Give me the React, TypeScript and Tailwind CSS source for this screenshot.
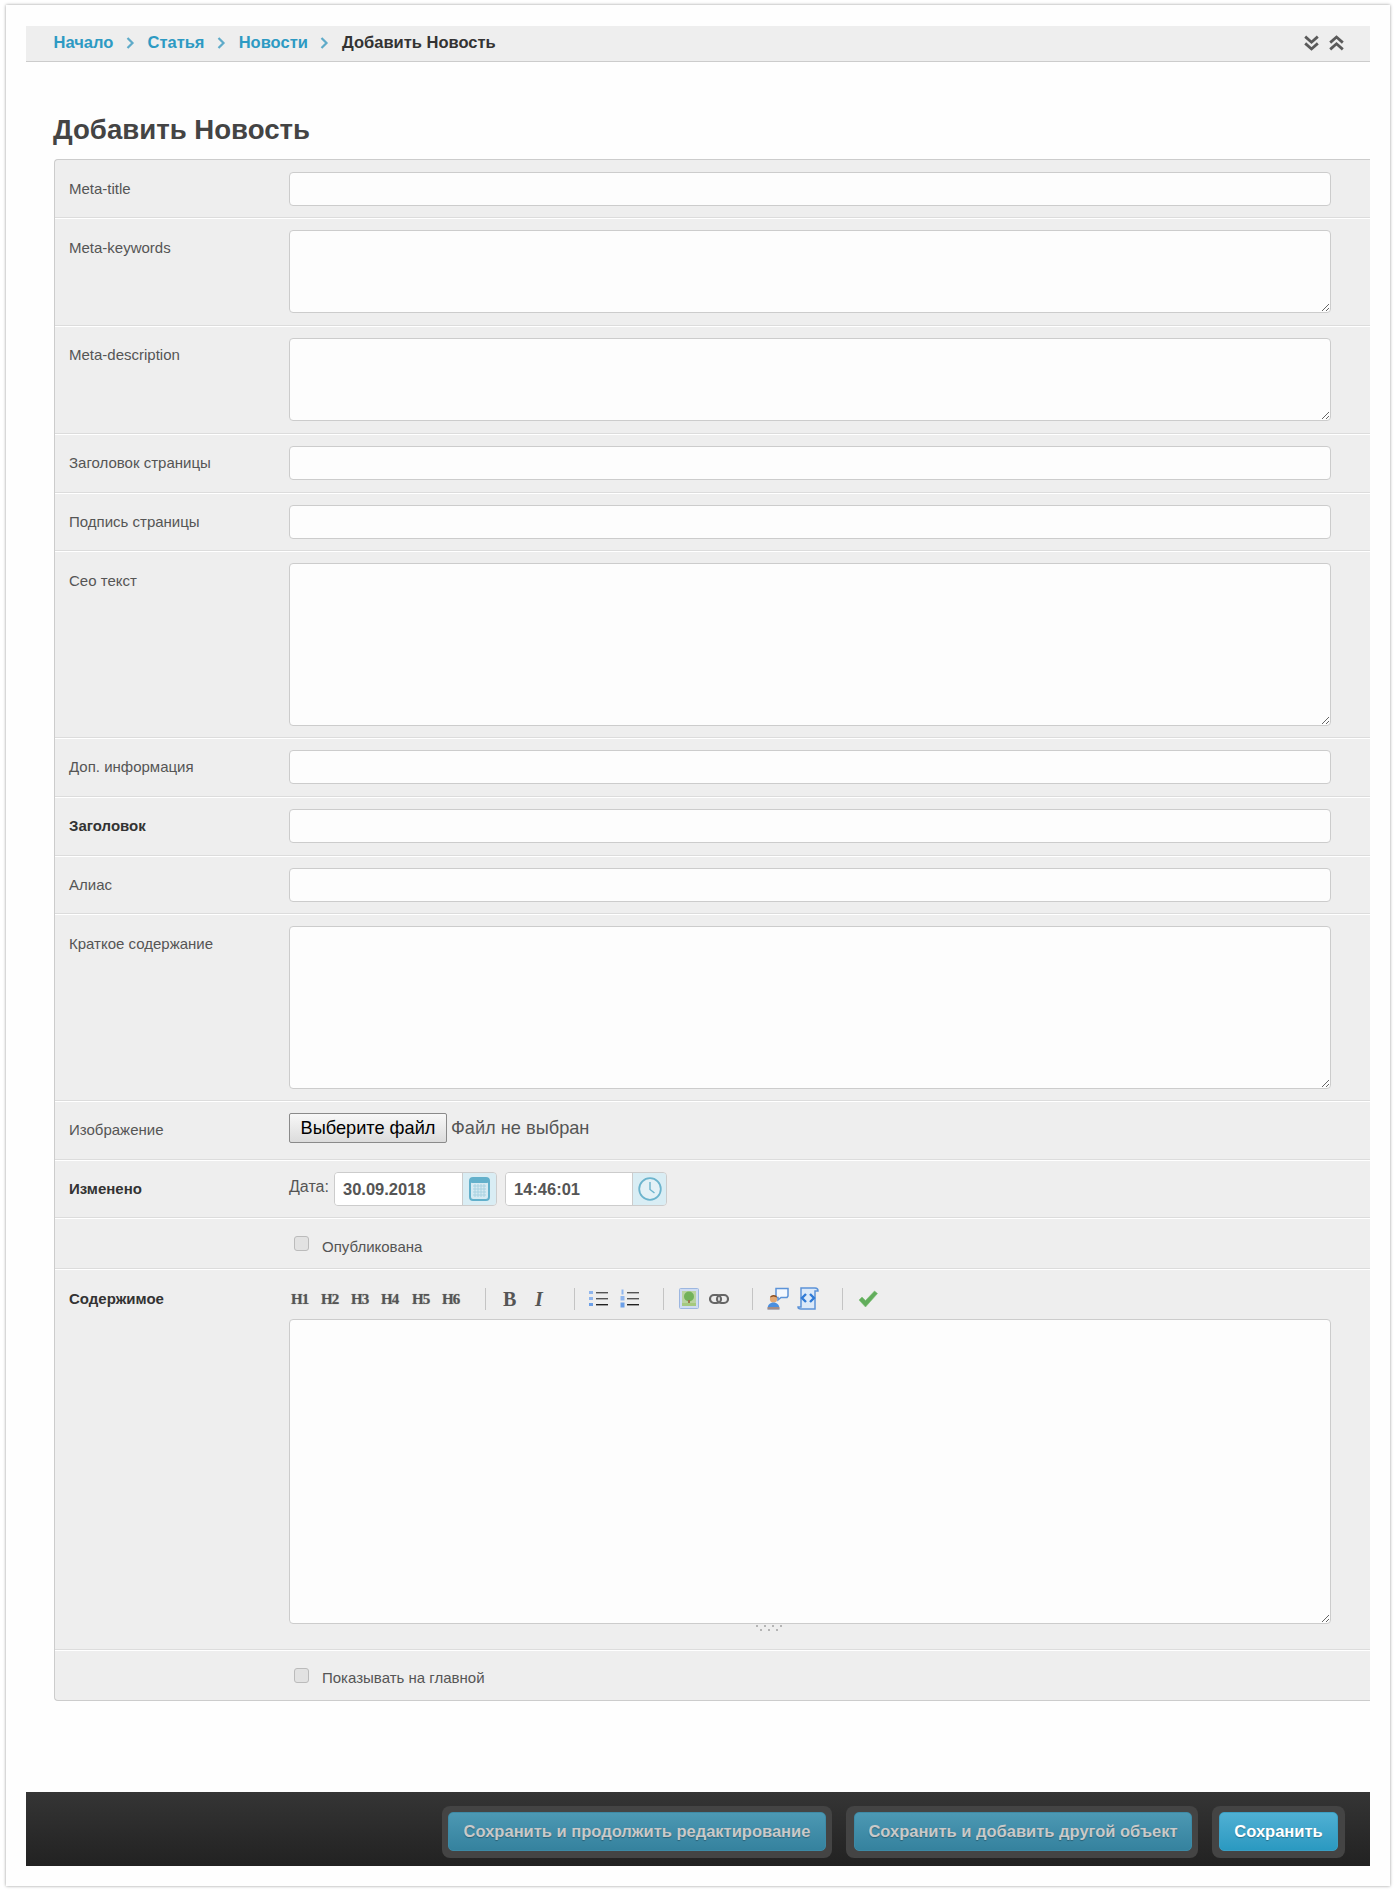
import React from "react";

const Chevron = () => (
  <svg width="9" height="12" viewBox="0 0 9 12" fill="none" className="shrink-0">
    <path d="M1.5 1L6.5 6L1.5 11" stroke="#5fabc9" strokeWidth="2.2" />
  </svg>
);

const Doubles = ({ up }: { up?: boolean }) => (
  <svg width="15" height="16" viewBox="0 0 15 16" fill="none" stroke="#5a5a5a" strokeWidth="2.8">
    {up ? (
      <>
        <path d="M1.2 7.6L7.5 2L13.8 7.6" />
        <path d="M1.2 14.4L7.5 8.8L13.8 14.4" />
      </>
    ) : (
      <>
        <path d="M1.2 1.6L7.5 7.2L13.8 1.6" />
        <path d="M1.2 8.4L7.5 14L13.8 8.4" />
      </>
    )}
  </svg>
);

const Label = ({ children, bold, low }: { children: React.ReactNode; bold?: boolean; low?: boolean }) => (
  <div className={`w-[234px] shrink-0 pl-[14px] leading-[34px] ${low ? "pt-[1px]" : ""} ${bold ? "font-bold text-[#333]" : "text-[#555]"}`}>{children}</div>
);

const Row = ({ h, first, children }: { h: string; first?: boolean; children: React.ReactNode }) => (
  <div className={`flex box-border border-b border-b-[#dcdcdc] ${first ? "pt-[12px]" : "pt-[11px] border-t border-t-white"} ${h}`}>{children}</div>
);

const TextRow = ({ label, h = "h-[58.67px]", first, bold }: { label: string; h?: string; first?: boolean; bold?: boolean }) => (
  <Row h={h} first={first}>
    <Label bold={bold}>{label}</Label>
    <input className="block w-[1042px] h-[34px] bg-[#fdfdfd] border border-[#ccc] rounded-[4px] outline-none" />
  </Row>
);

const AreaRow = ({ label, h, area, low }: { label: string; h: string; area: string; low?: boolean }) => (
  <Row h={h}>
    <Label low={low}>{label}</Label>
    <textarea className={`block w-[1042px] bg-[#fdfdfd] border border-[#ccc] rounded-[4px] outline-none ${area}`} />
  </Row>
);

const Sep = ({ w }: { w: string }) => (
  <div className={`${w} h-[22px] shrink-0`}>
    <div className="w-px h-[22px] bg-[#c4c4c4]" />
  </div>
);

const H = ({ t, w = "w-[30px]" }: { t: string; w?: string }) => (
  <div className={`${w} shrink-0 font-["Liberation_Serif",serif] font-bold text-[15px] tracking-[-1px] text-[#555] leading-[22px] [text-shadow:0_0_1px_#999]`}>{t}</div>
);

const UlIcon = () => (
  <svg width="19" height="19" viewBox="0 0 19 19" className="blur-[0.4px]">
    <rect x="0" y="2" width="4" height="3" fill="#8fb6ee" />
    <rect x="0" y="8" width="4" height="3" fill="#8fb6ee" />
    <rect x="0" y="14" width="4" height="3" fill="#6b9fe8" />
    <rect x="7" y="3" width="12" height="1.4" fill="#555" />
    <rect x="7" y="9" width="12" height="1.4" fill="#555" />
    <rect x="7" y="15" width="12" height="1.4" fill="#222" />
  </svg>
);

const OlIcon = () => (
  <svg width="19" height="19" viewBox="0 0 19 19" className="blur-[0.4px]">
    <rect x="1.5" y="0.5" width="2" height="5" fill="#8fb6ee" />
    <rect x="0.5" y="7" width="4" height="4.5" fill="#8fb6ee" />
    <rect x="0.5" y="13.5" width="4" height="5" fill="#6b9fe8" />
    <rect x="7" y="3" width="12" height="1.4" fill="#555" />
    <rect x="7" y="9" width="12" height="1.4" fill="#555" />
    <rect x="7" y="15" width="12" height="1.4" fill="#222" />
  </svg>
);

const ImageIcon = () => (
  <svg width="20" height="21" viewBox="0 0 20 21" className="blur-[0.4px]">
    <rect x="0.5" y="0.5" width="19" height="20" rx="1" fill="#cfdcf3" stroke="#9db7e0" />
    <rect x="3" y="3" width="14" height="15" fill="#b9d3a0" />
    <circle cx="10" cy="8.5" r="5" fill="#72b25a" />
    <rect x="9" y="12" width="2" height="4" fill="#9a7a4c" />
    <rect x="3" y="15" width="14" height="3" fill="#a5c97f" />
  </svg>
);

const LinkIcon = () => (
  <svg width="20" height="12" viewBox="0 0 20 12" fill="none" stroke="#666" strokeWidth="2.2" className="blur-[0.4px]">
    <rect x="1" y="2" width="11" height="8" rx="4" />
    <rect x="8" y="2" width="11" height="8" rx="4" />
  </svg>
);

const PersonIcon = () => (
  <svg width="22" height="23" viewBox="0 0 22 23" className="blur-[0.4px]">
    <path d="M9 1.5h12v7.5l-1 1.5h-6l-3 2.5v-2.5h-2z" fill="#f4f8fe" stroke="#5c93d8" strokeWidth="1.5" />
    <circle cx="6.5" cy="12" r="3.6" fill="#e3a873" />
    <path d="M3 10.5c0-3 7-3.5 7 0l-3.5-1z" fill="#8a4f24" />
    <path d="M0.5 22.5c0-5 2.5-7 6-7s6 2 6 7z" fill="#4a8fe0" />
    <rect x="0.5" y="20" width="12" height="2.5" fill="#e08a4a" opacity="0.6" />
  </svg>
);

const SourceIcon = () => (
  <svg width="22" height="23" viewBox="0 0 22 23" className="blur-[0.4px]">
    <path d="M4 1h14c2 0 3 1 3 3h-3v18H4c-2 0-3-1-3-2h3z" fill="#dce9f8" stroke="#5c93d8" strokeWidth="1.5" />
    <path d="M9 7l-4 4 4 4M13 7l4 4-4 4" fill="none" stroke="#2f7ad6" strokeWidth="2.4" />
  </svg>
);

const CheckIcon = () => (
  <svg width="20" height="18" viewBox="0 0 20 18" className="blur-[0.4px]">
    <path d="M1 10l3-3 3.5 3.5L16.5 1 19.5 3.5 7.5 17z" fill="#62ad5c" stroke="#7cc173" strokeWidth="0.6" />
  </svg>
);

const Calendar = () => (
  <svg width="21" height="24" viewBox="0 0 21 24">
    <rect x="1" y="1" width="19" height="22" rx="3" fill="#d6eaf2" stroke="#62b0cb" strokeWidth="2" />
    <rect x="1" y="1" width="19" height="5" rx="2" fill="#62b0cb" />
    <g stroke="#a8d2e1" strokeWidth="1">
      <path d="M4 9h13M4 12h13M4 15h13M4 18h13M6 7v13M9 7v13M12 7v13M15 7v13" />
    </g>
  </svg>
);

const Clock = () => (
  <svg width="24" height="24" viewBox="0 0 24 24" fill="none">
    <circle cx="12" cy="12" r="10.8" fill="#e3f1f6" stroke="#6cb4cd" strokeWidth="1.8" />
    <path d="M12 5v7.5l4.5 3.5" stroke="#6cb4cd" strokeWidth="1.4" />
  </svg>
);

const Addon = ({ children, input, w }: { children: React.ReactNode; input: string; w: string }) => (
  <div className="flex h-[34px] border border-[#ccc] rounded-[4px] overflow-hidden">
    <input defaultValue={input} className={`${w} bg-white pl-[8px] pt-[1px] font-bold text-[16.5px] text-[#555] outline-none`} />
    <div className="w-[34px] flex items-center justify-center bg-[#d9edf4] border-l border-[#ccc]">{children}</div>
  </div>
);

const FootBtn = ({ children, primary, w, pad }: { children: string; primary?: boolean; w: string; pad: string }) => (
  <div className={`${pad} pt-[6px] pb-[7px] bg-[#444] rounded-[8px]`}>
    <button
      className={`block ${w} h-[39px] rounded-[5px] font-bold text-[16.5px] ${
        primary
          ? "bg-gradient-to-b from-[#4fb0d3] to-[#2a99c1] text-white border border-[#3a9fc4]"
          : "bg-gradient-to-b from-[#4c98b3] to-[#35829e] text-[#c9c9c9] border border-[#3d8aa6]"
      } [text-shadow:0_1px_1px_rgba(0,0,0,0.3)]`}
    >
      {children}
    </button>
  </div>
);

const Check = ({ label, textTop }: { label: string; textTop: string }) => (
  <div className="flex">
    <div className="w-[234px] shrink-0" />
    <input type="checkbox" className="appearance-none block ml-[5px] mt-[7px] w-[15px] h-[15px] bg-[#e2e2e2] border border-[#bbb] rounded-[3px]" />
    <span className={`ml-[13px] ${textTop} leading-[20px] text-[#555]`}>{label}</span>
  </div>
);

export default function App() {
  return (
    <div className="bg-white pt-[5px] pb-[6px] pl-[6px] font-['Liberation_Sans',Arial,sans-serif] text-[15px]">
      <div className="w-[1384px] h-[1881px] box-border bg-[#fefefe] pt-[21px] pl-[20px] pr-[20px] shadow-[0_0_3px_rgba(0,0,0,0.4)]">
        <div className="h-[36px] flex items-center justify-between pl-[27.5px] pr-[26px] pb-[2px] bg-[#eee] border-b border-[#ccc]">
          <div className="flex items-center gap-[12.6px] text-[16.5px] font-bold">
            <a className="text-[#2d9ac3]">Начало</a>
            <Chevron />
            <a className="text-[#2d9ac3]">Статья</a>
            <Chevron />
            <a className="text-[#2d9ac3]">Новости</a>
            <Chevron />
            <span className="text-[#333]">Добавить Новость</span>
          </div>
          <div className="flex items-center gap-[10px]">
            <Doubles />
            <Doubles up />
          </div>
        </div>

        <h1 className="ml-[27px] mt-[53px] mb-[14px] text-[27.6px] leading-[30px] font-bold text-[#444]">Добавить Новость</h1>

        <div className="ml-[28px] bg-[#eee] border-l border-t border-b border-[#ccc] rounded-l-[4px]">
          <TextRow label="Meta-title" h="h-[58px]" first />
          <AreaRow label="Meta-keywords" h="h-[108px]" area="h-[83px]" low />
          <AreaRow label="Meta-description" h="h-[108px]" area="h-[83px]" />
          <TextRow label="Заголовок страницы" />
          <TextRow label="Подпись страницы" />
          <AreaRow label="Сео текст" h="h-[187px]" area="h-[163px]" low />
          <TextRow label="Доп. информация" />
          <TextRow label="Заголовок" bold />
          <TextRow label="Алиас" />
          <AreaRow label="Краткое содержание" h="h-[186.7px]" area="h-[163px]" low />
          <Row h="h-[58.67px]">
            <Label>Изображение</Label>
            <div className="flex items-start">
              <button className="h-[30px] w-[158px] bg-gradient-to-b from-[#f8f8f8] to-[#dcdcdc] border border-[#8a8a8a] rounded-[2px] text-[18.2px] text-black leading-[26px]">Выберите файл</button>
              <span className="ml-[4px] text-[18.2px] leading-[31px] text-[#555]">Файл не выбран</span>
            </div>
          </Row>
          <Row h="h-[58.67px]">
            <Label bold>Изменено</Label>
            <div className="flex items-start">
              <span className="text-[16px] leading-[30px] text-[#555] w-[45px]">Дата:</span>
              <Addon input="30.09.2018" w="w-[127px]"><Calendar /></Addon>
              <div className="w-[8px]" />
              <Addon input="14:46:01" w="w-[126px]"><Clock /></Addon>
            </div>
          </Row>
          <div className="h-[50.67px] box-border border-t border-t-white border-b border-b-[#dcdcdc] pt-[10px]">
            <Check label="Опубликована" textTop="mt-[8px]" />
          </div>
          <div className="flex h-[381px] box-border border-t border-t-white border-b border-b-[#dcdcdc] pt-[11px]">
            <Label bold low>Содержимое</Label>
            <div className="pt-[7px]">
              <div className="flex items-center h-[22px] mb-[9px] pl-[2px]">
                <H t="H1" />
                <H t="H2" />
                <H t="H3" />
                <H t="H4" w="w-[31px]" />
                <H t="H5" />
                <H t="H6" w="w-[43px]" />
                <Sep w="w-[18px]" />
                <div className="w-[32px] shrink-0 font-['Liberation_Serif',serif] font-bold text-[20px] leading-[22px] text-[#555]">B</div>
                <div className="w-[39px] shrink-0 font-['Liberation_Serif',serif] font-bold italic text-[20px] leading-[22px] text-[#555]">I</div>
                <Sep w="w-[15px]" />
                <div className="w-[31px] shrink-0"><UlIcon /></div>
                <div className="w-[43px] shrink-0"><OlIcon /></div>
                <Sep w="w-[16px]" />
                <div className="w-[30px] shrink-0"><ImageIcon /></div>
                <div className="w-[43px] shrink-0"><LinkIcon /></div>
                <Sep w="w-[15px]" />
                <div className="w-[30px] shrink-0"><PersonIcon /></div>
                <div className="w-[45px] shrink-0"><SourceIcon /></div>
                <Sep w="w-[16px]" />
                <CheckIcon />
              </div>
              <textarea className="block w-[1042px] h-[305px] bg-[#fdfdfd] border border-[#ccc] rounded-[4px] outline-none" />
              <svg width="30" height="7" viewBox="0 0 30 7" className="block ml-[466px]">
                <g fill="#b4b4b4">
                  <rect x="1" y="1" width="2" height="2" />
                  <rect x="9" y="1" width="2" height="2" />
                  <rect x="17" y="1" width="2" height="2" />
                  <rect x="25" y="1" width="2" height="2" />
                  <rect x="5" y="5" width="2" height="2" />
                  <rect x="13" y="5" width="2" height="2" />
                  <rect x="21" y="5" width="2" height="2" />
                </g>
              </svg>
            </div>
          </div>
          <div className="h-[50px] box-border border-t border-t-white pt-[10px]">
            <Check label="Показывать на главной" textTop="mt-[7px]" />
          </div>
        </div>

        <div className="mt-[91px] h-[74px] flex items-end justify-end gap-[14px] pr-[25px] pb-[8px] bg-gradient-to-b from-[#353535] to-[#222]">
          <FootBtn w="w-[378px]" pad="px-[6px]">Сохранить и продолжить редактирование</FootBtn>
          <FootBtn w="w-[338px]" pad="pl-[8px] pr-[6px]">Сохранить и добавить другой объект</FootBtn>
          <FootBtn w="w-[119px]" pad="px-[7px]" primary>Сохранить</FootBtn>
        </div>
      </div>
    </div>
  );
}
